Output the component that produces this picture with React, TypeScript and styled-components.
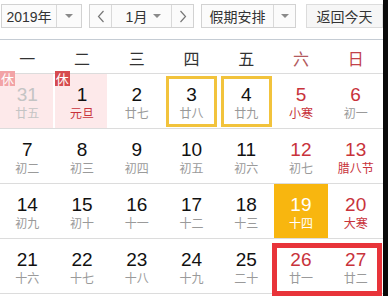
import React from "react";
import styled, { createGlobalStyle } from "styled-components";

const Global = createGlobalStyle`
  html, body { margin: 0; padding: 0; background: #fff; }
  body { font-family: "Liberation Sans", "Noto Sans CJK SC", sans-serif; }
`;

const Page = styled.div`
  display: flex;
  width: 388px;
  height: 296px;
  overflow: hidden;
`;

const Calendar = styled.div`
  position: relative;
  width: 383px;
  display: flex;
  flex-direction: column;
`;

const Edge = styled.div`
  width: 5px;
  background: #0a0a0a;
`;

const Toolbar = styled.div`
  height: 40px;
  box-sizing: border-box;
  border-bottom: 1px solid #c5ccd4;
  display: flex;
  align-items: flex-start;
  padding: 4px 0 0 1px;
  gap: 7px;
`;

const Group = styled.div`
  display: flex;
  height: 24px;
  box-sizing: border-box;
  border: 1px solid #d2d2d2;
  background: #fbfbfb;
`;

const Part = styled.div<{ $w: number; $sep?: boolean; $pl?: number }>`
  width: ${(p) => p.$w}px;
  display: flex;
  align-items: center;
  justify-content: center;
  padding-left: ${(p) => p.$pl ?? 0}px;
  box-sizing: border-box;
  border-left: ${(p) => (p.$sep ? "1px solid #d9d9d9" : "none")};
  font-size: 14px;
  color: #333;
`;

const Caret = styled.span`
  width: 0;
  height: 0;
  border-left: 4px solid transparent;
  border-right: 4px solid transparent;
  border-top: 4px solid #8a8a8a;
`;

const Label = styled.span`
  flex: 1;
  text-align: center;
`;

const Spacer = styled.span`
  width: 10px;
`;

const TodayButton = styled.div`
  margin-left: 3px;
  width: 80px;
  height: 24px;
  box-sizing: border-box;
  border: 1px solid #dcdcdc;
  background: #f6f6f6;
  display: flex;
  align-items: center;
  justify-content: center;
  font-size: 14px;
  color: #333;
`;

const Weekdays = styled.div`
  height: 34px;
  box-sizing: border-box;
  border-bottom: 1px solid #dcdcdc;
  display: grid;
  grid-template-columns: repeat(7, 1fr);
  align-items: center;
`;

const Weekday = styled.div<{ $color: string }>`
  text-align: center;
  font-size: 16px;
  color: ${(p) => p.$color};
  padding-top: 2px;
`;

const Grid = styled.div`
  display: grid;
  grid-template-columns: repeat(7, 1fr);
  grid-auto-rows: 55px;
`;

type Kind = "normal" | "faded" | "holiday" | "outlined" | "today";

const Cell = styled.div<{ $kind: Kind }>`
  position: relative;
  box-sizing: border-box;
  border-bottom: 1px solid #dcdcdc;
  display: flex;
  flex-direction: column;
  align-items: center;
  padding-top: 11px;
  background: ${(p) =>
    p.$kind === "faded" || p.$kind === "holiday"
      ? "#fde9ea"
      : p.$kind === "today"
      ? "#f8b60f"
      : "#fff"};
  box-shadow: ${(p) =>
    p.$kind === "faded" || p.$kind === "holiday" ? "inset -2px 0 0 #fff" : "none"};
  outline: ${(p) => (p.$kind === "outlined" ? "3px solid #f2c33c" : "none")};
  outline-offset: -5px;
`;

const Num = styled.div<{ $color: string }>`
  font-size: 19px;
  line-height: 20px;
  color: ${(p) => p.$color};
`;

const Lunar = styled.div<{ $color: string }>`
  font-size: 12px;
  line-height: 16px;
  color: ${(p) => p.$color};
  font-family: "Noto Sans CJK SC", sans-serif;
`;

const Badge = styled.span<{ $faded?: boolean }>`
  position: absolute;
  left: 0;
  top: -3px;
  width: 15px;
  height: 15px;
  font-size: 13px;
  line-height: 15px;
  text-align: center;
  color: #fff;
  background: ${(p) => (p.$faded ? "#f2a3a6" : "#d64b4f")};
  font-family: "Noto Sans CJK SC", sans-serif;
`;

const Annotation = styled.div`
  position: absolute;
  left: 272px;
  top: 243px;
  width: 110px;
  height: 53px;
  box-sizing: border-box;
  border: 5px solid #e8343a;
  pointer-events: none;
`;

const RED = "#c8333b";
const BLACK = "#111";
const GREY = "#9a9a9a";

type Day = {
  n: number;
  l: string;
  kind?: Kind;
  nRed?: boolean;
  lRed?: boolean;
  badge?: "faded" | "normal";
};

const days: Day[] = [
  { n: 31, l: "廿五", kind: "faded", badge: "faded" },
  { n: 1, l: "元旦", kind: "holiday", lRed: true, badge: "normal" },
  { n: 2, l: "廿七" },
  { n: 3, l: "廿八", kind: "outlined" },
  { n: 4, l: "廿九", kind: "outlined" },
  { n: 5, l: "小寒", nRed: true, lRed: true },
  { n: 6, l: "初一", nRed: true },
  { n: 7, l: "初二" },
  { n: 8, l: "初三" },
  { n: 9, l: "初四" },
  { n: 10, l: "初五" },
  { n: 11, l: "初六" },
  { n: 12, l: "初七", nRed: true },
  { n: 13, l: "腊八节", nRed: true, lRed: true },
  { n: 14, l: "初九" },
  { n: 15, l: "初十" },
  { n: 16, l: "十一" },
  { n: 17, l: "十二" },
  { n: 18, l: "十三" },
  { n: 19, l: "十四", kind: "today" },
  { n: 20, l: "大寒", nRed: true, lRed: true },
  { n: 21, l: "十六" },
  { n: 22, l: "十七" },
  { n: 23, l: "十八" },
  { n: 24, l: "十九" },
  { n: 25, l: "二十" },
  { n: 26, l: "廿一", nRed: true },
  { n: 27, l: "廿二", nRed: true },
];

const Chevron = ({ dir }: { dir: "left" | "right" }) => (
  <svg width="8" height="13" viewBox="0 0 8 13">
    <polyline
      points={dir === "left" ? "6.5,1 1.5,6.5 6.5,12" : "1.5,1 6.5,6.5 1.5,12"}
      fill="none"
      stroke="#777"
      strokeWidth="1.2"
    />
  </svg>
);

const weekdays: [string, string][] = [
  ["一", "#333"],
  ["二", "#333"],
  ["三", "#333"],
  ["四", "#333"],
  ["五", "#333"],
  ["六", "#b35a5e"],
  ["日", "#c2424a"],
];

export default function App() {
  return (
    <>
      <Global />
      <Page>
        <Calendar>
          <Toolbar>
            <Group>
              <Part $w={54}>2019年</Part>
              <Part $w={25} $sep>
                <Caret />
              </Part>
            </Group>
            <Group>
              <Part $w={21}>
                <Chevron dir="left" />
              </Part>
              <Part $w={60} $sep $pl={8}>
                <Label>1月</Label>
                <Caret />
                <Spacer />
              </Part>
              <Part $w={22} $sep>
                <Chevron dir="right" />
              </Part>
            </Group>
            <Group>
              <Part $w={71}>假期安排</Part>
              <Part $w={22} $sep>
                <Caret />
              </Part>
            </Group>
            <TodayButton>返回今天</TodayButton>
          </Toolbar>
          <Weekdays>
            {weekdays.map(([w, c]) => (
              <Weekday key={w} $color={c}>
                {w}
              </Weekday>
            ))}
          </Weekdays>
          <Grid>
            {days.map((d) => {
              const kind = d.kind ?? "normal";
              const numColor =
                kind === "today" ? "#fff" : kind === "faded" ? "#c4c4c4" : d.nRed ? RED : BLACK;
              const lunarColor =
                kind === "today" ? "#fff" : kind === "faded" ? "#c4c4c4" : d.lRed ? RED : GREY;
              return (
                <Cell key={d.n} $kind={kind}>
                  {d.badge && <Badge $faded={d.badge === "faded"}>休</Badge>}
                  <Num $color={numColor}>{d.n}</Num>
                  <Lunar $color={lunarColor}>{d.l}</Lunar>
                </Cell>
              );
            })}
          </Grid>
          <Annotation />
        </Calendar>
        <Edge />
      </Page>
    </>
  );
}
